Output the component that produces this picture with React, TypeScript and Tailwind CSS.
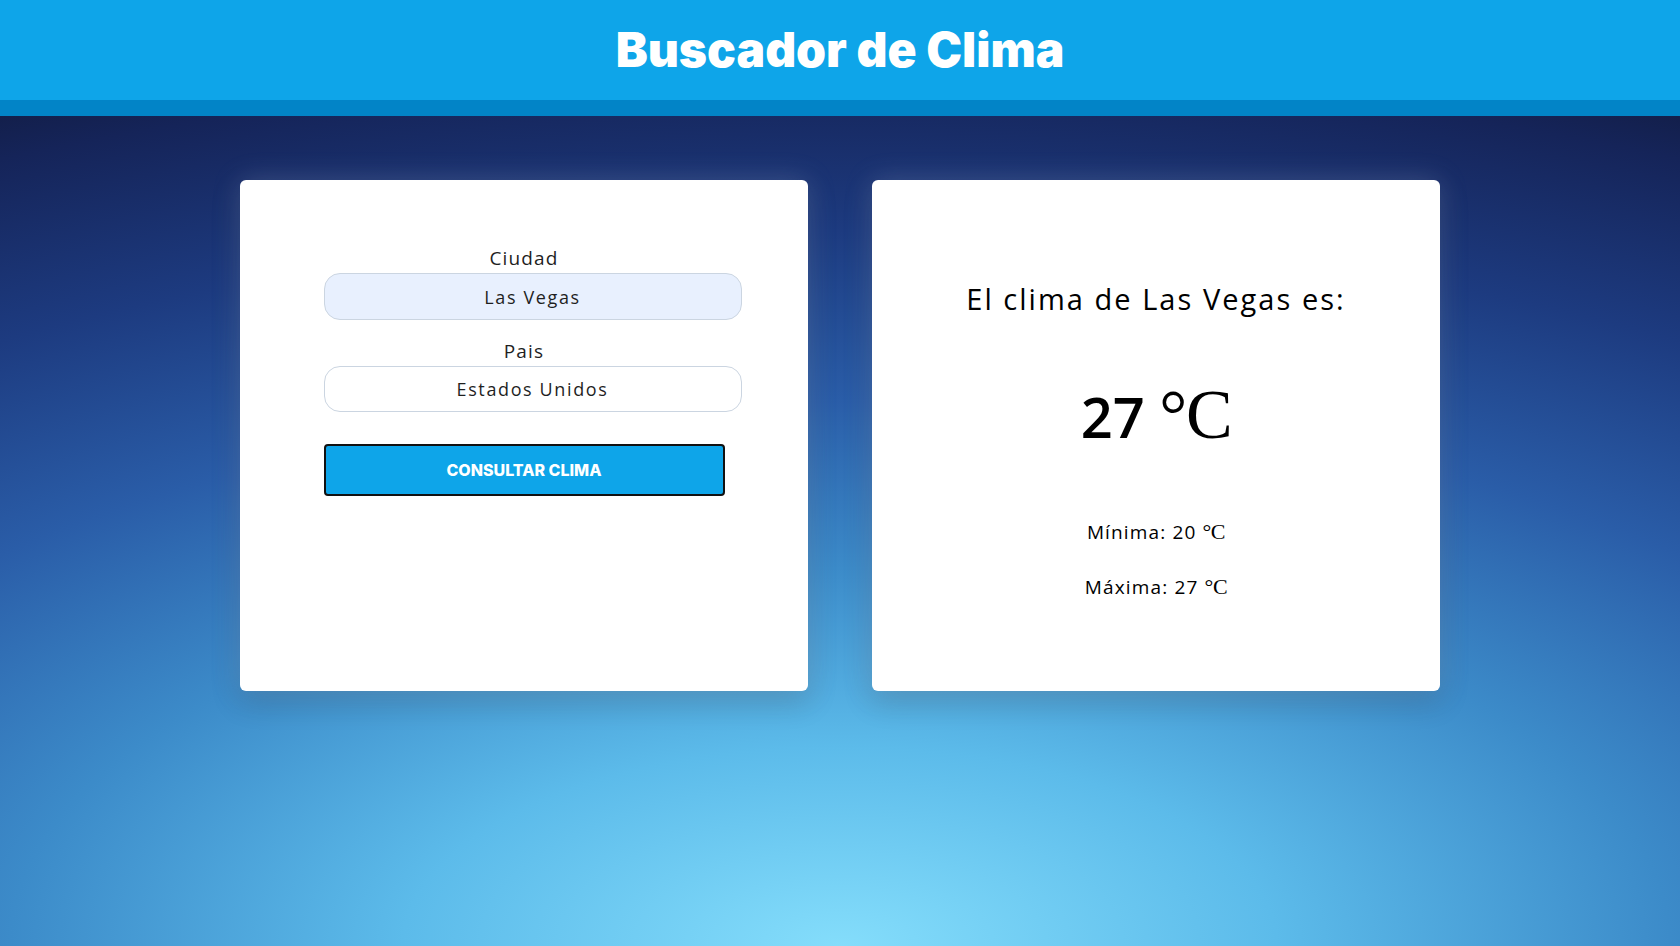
import { useState } from "react";

const body = "font-['Open_Sans','Noto_Sans',sans-serif]";

function Degree({ big }: { big?: boolean }) {
  return (
    <span
      className={`font-['Liberation_Serif','DejaVu_Serif',serif] font-normal tracking-[-0.02em] ${big ? "text-[70px]" : "text-[22px]"}`}
    >
      °C
    </span>
  );
}

export default function App() {
  const [ciudad, setCiudad] = useState("Las Vegas");
  const [pais, setPais] = useState("Estados Unidos");

  return (
    <div className="min-h-screen flex flex-col bg-[radial-gradient(ellipse_130%_105%_at_50%_100%,#84ddfb_0%,#5cbbea_20%,#3c8bc9_38%,#2a5da8_55%,#1d3b80_72%,#152459_88%,#0f1530_100%)]">
      <header className="bg-[#0ea5e9] border-b-[16px] border-[#0284c7]">
        <h1 className="h-[100px] flex items-center justify-center text-white text-[48px] font-black font-['Inter',sans-serif]">
          Buscador de Clima
        </h1>
      </header>

      <main className="flex justify-center gap-16 pt-16">
        {/* Formulario */}
        <section className="w-[568px] h-[511px] bg-white rounded-md shadow-[0_0_28px_rgba(190,215,255,0.22),0_10px_30px_rgba(0,0,0,0.2)] flex flex-col items-center pt-[66px]">
          <form className={`w-[401px] flex flex-col ${body}`} onSubmit={(e) => e.preventDefault()}>
            <label className="text-center text-[19px] leading-6 tracking-[0.06em] text-[#1f1f1f]">Ciudad</label>
            <input
              value={ciudad}
              onChange={(e) => setCiudad(e.target.value)}
              className="mt-[3px] w-[418px] h-[47px] rounded-2xl border border-[#cbd5e1] bg-[#e8f0fe] text-center text-[18px] tracking-[0.09em] text-[#1f1f1f] outline-none"
            />
            <label className="mt-[19px] text-center text-[19px] leading-6 tracking-[0.06em] text-[#1f1f1f]">Pais</label>
            <input
              value={pais}
              onChange={(e) => setPais(e.target.value)}
              className="mt-[3px] w-[418px] h-[46px] rounded-2xl border border-[#cbd5e1] bg-white text-center text-[18px] tracking-[0.09em] text-[#1f1f1f] outline-none"
            />
            <button
              type="submit"
              className="mt-8 h-[52px] w-full rounded-[4px] border-2 border-[#111] bg-[#0ea5e9] text-white text-[16px] font-extrabold font-['Inter',sans-serif]"
            >
              CONSULTAR CLIMA
            </button>
          </form>
        </section>

        {/* Resultado */}
        <section className={`w-[568px] h-[511px] bg-white rounded-md shadow-[0_0_28px_rgba(190,215,255,0.22),0_10px_30px_rgba(0,0,0,0.2)] flex flex-col items-center text-black ${body}`}>
          <h2 className="mt-[101px] text-[29px] leading-9 font-medium tracking-[0.07em]">El clima de Las Vegas es:</h2>
          <p className="mt-[58px] text-[56px] leading-[80px] font-semibold">
            27 <Degree big />
          </p>
          <p className="mt-[64px] text-[19px] leading-6 tracking-[0.06em]">
            Mínima: 20 <Degree />
          </p>
          <p className="mt-[31px] text-[19px] leading-6 tracking-[0.06em]">
            Máxima: 27 <Degree />
          </p>
        </section>
      </main>
    </div>
  );
}
